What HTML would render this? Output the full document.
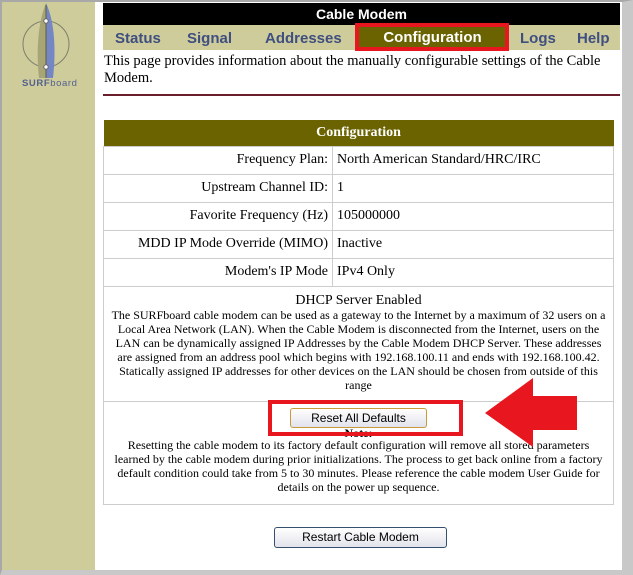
<!DOCTYPE html>
<html><head><meta charset="utf-8"><style>
*{margin:0;padding:0;box-sizing:border-box}
body{width:633px;height:575px;background:#fff;position:relative;overflow:hidden;font-family:"Liberation Serif",serif;font-size:13px;color:#000}
.frame{position:absolute;left:0;top:0;width:633px;height:575px;border:2px solid #a8a8a8;border-right:11px solid #c8c8c8;border-bottom:5px solid #c8c8c8}
.side{position:absolute;left:2px;top:2px;width:93px;height:568px;background:#cfcc9c}
.hdr{position:absolute;left:103px;top:3px;width:517px;height:22px;background:#000;color:#fff;font:bold 14px "Liberation Sans",sans-serif;text-align:center;line-height:22px}
.nav{position:absolute;left:103px;top:25px;width:517px;height:25px;background:#cfcc9c;font:bold 15px "Liberation Sans",sans-serif;color:#3f4f7f}
.nav span{position:absolute;top:5px}
.cfg{position:absolute;left:358px;top:25px;width:149px;height:25px;background:#6b6300;color:#fff;font:bold 15px "Liberation Sans",sans-serif;text-align:center;line-height:26px}
.red{position:absolute;border:4px solid #e8161e}
p.intro{position:absolute;left:104px;top:53px;width:516px;font-size:14.5px;line-height:17px}
.hr{position:absolute;left:103px;top:94px;width:517px;height:2px;background:#6a1d2a}
table{position:absolute;left:103px;top:120px;width:511px;border-collapse:collapse}
td{border:1px solid #cdcdcd;height:28px;font-size:14px;padding:0 4px}
td.l{text-align:right;width:229px}
th{background:#6b6300;color:#fff;font-weight:bold;height:26px;font-size:14px}
.small{font-size:12px;line-height:14px;text-align:center;padding:2px 4px}
.btn{display:inline-block;border:1px solid #35506e;border-radius:3px;background:linear-gradient(#fff,#e2e2ec);font:12px "Liberation Sans",sans-serif;text-align:center;line-height:18px}
</style></head><body>
<div class="side">
<svg width="93" height="95" viewBox="0 0 93 95">
<circle cx="44" cy="42" r="23" fill="none" stroke="#7d7f6b" stroke-width="1"/>
<path d="M44 1 C36 20 34 50 37 76 L44 76 Z" fill="#a7a576"/>
<path d="M44 1 C53 20 54 50 51 76 L44 76 Z" fill="#7486c4"/>
<line x1="44" y1="3" x2="44" y2="76" stroke="#5b603f" stroke-width="1"/>
<circle cx="44" cy="19" r="2.2" fill="#fff" stroke="#666"/>
<circle cx="44" cy="65" r="2.2" fill="#fff" stroke="#666"/>
<text x="20" y="84" font-family="Liberation Sans" font-size="9.5" fill="#53618e" letter-spacing="0.6"><tspan font-weight="bold">SURF</tspan>board</text>
</svg>
</div>
<div class="hdr">Cable Modem</div>
<div class="nav"><span style="left:12px">Status</span><span style="left:84px">Signal</span><span style="left:162px">Addresses</span><span style="left:417px">Logs</span><span style="left:474px">Help</span></div>
<div class="cfg">Configuration</div>
<div class="red" style="left:355px;top:23px;width:154px;height:28px"></div>
<p class="intro">This page provides information about the manually configurable settings of the Cable Modem.</p>
<div class="hr"></div>
<table>
<tr><th colspan="2">Configuration</th></tr>
<tr><td class="l">Frequency Plan:</td><td>North American Standard/HRC/IRC</td></tr>
<tr><td class="l">Upstream Channel ID:</td><td>1</td></tr>
<tr><td class="l">Favorite Frequency (Hz)</td><td>105000000</td></tr>
<tr><td class="l">MDD IP Mode Override (MIMO)</td><td>Inactive</td></tr>
<tr><td class="l">Modem's IP Mode</td><td>IPv4 Only</td></tr>
<tr><td colspan="2" class="small" style="height:115px;vertical-align:top;padding-top:6px"><div style="font-size:14px;line-height:15px">DHCP Server Enabled</div>The SURFboard cable modem can be used as a gateway to the Internet by a maximum of 32 users on a Local Area Network (LAN). When the Cable Modem is disconnected from the Internet, users on the LAN can be dynamically assigned IP Addresses by the Cable Modem DHCP Server. These addresses are assigned from an address pool which begins with 192.168.100.11 and ends with 192.168.100.42. Statically assigned IP addresses for other devices on the LAN should be chosen from outside of this range</td></tr>
<tr><td colspan="2" class="small" style="height:103px;vertical-align:top;padding:6px 8px 0"><span class="btn" style="width:137px;border-color:#c89a3a">Reset All Defaults</span><div style="font-weight:bold;line-height:10px">Note:</div>Resetting the cable modem to its factory default configuration will remove all stored parameters learned by the cable modem during prior initializations. The process to get back online from a factory default condition could take from 5 to 30 minutes. Please reference the cable modem User Guide for details on the power up sequence.</td></tr>
</table>
<div class="red" style="left:268px;top:400px;width:195px;height:36px"></div>
<svg style="position:absolute;left:485px;top:376px" width="95" height="72"><polygon points="0,37 48,2 48,20 92,20 92,54 48,54 48,71" fill="#e8161e"/></svg>
<div class="btn" style="position:absolute;left:274px;top:527px;width:173px;height:21px">Restart Cable Modem</div>
<div class="frame"></div>
</body></html>
